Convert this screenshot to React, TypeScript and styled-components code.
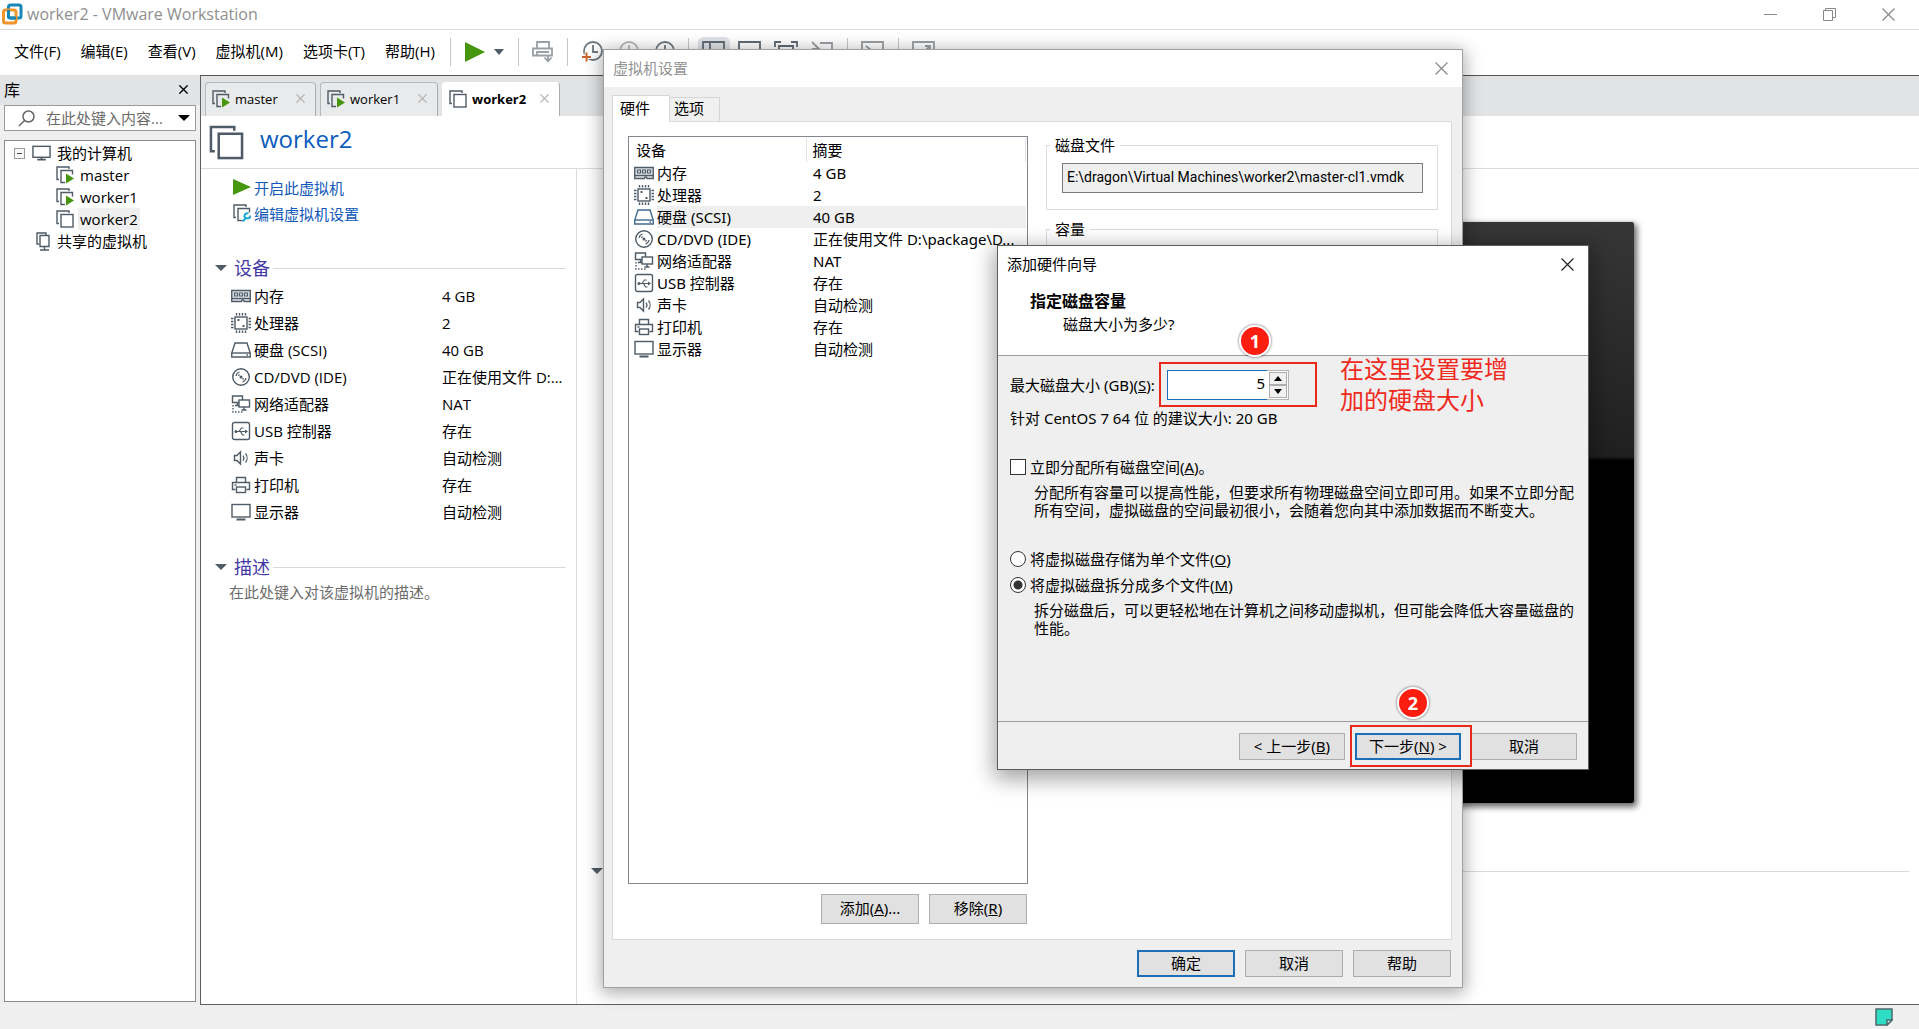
import React, { useState } from 'react';
import styled, { createGlobalStyle, css } from 'styled-components';

const uiFont = '"Open Sans", "Noto Sans CJK SC", sans-serif';
const dialogFont = '"Noto Sans", "Noto Sans CJK SC", sans-serif';
const slate = '#4f5b66';
const green = '#46960f';

const Global = createGlobalStyle`
  *, *::before, *::after { box-sizing: border-box; }
  body { margin: 0; font-family: ${uiFont}; font-size: 15px; color: #000; background: #fff; overflow: hidden; }
  button, input { font: inherit; color: inherit; }
  button { padding: 0; border: 0; background: none; white-space: nowrap; }
  h1, h2, p, ul, fieldset, legend { margin: 0; padding: 0; }
  ul { list-style: none; }
  svg { display: block; flex: none; }
`;

/* ---------- icons ---------- */

const VmIcon = ({ size = 18, running = false, tool = false, weight = 1.4 }: { size?: number; running?: boolean; tool?: boolean; weight?: number }) => (
  <svg width={size} height={size} viewBox="0 0 18 18" fill="none" stroke={slate} strokeWidth={weight}>
    <path d="M13 3V1H1v12.5h2" />
    {running || tool ? <path d="M16.5 8.5V4.5H5v12h4" /> : <rect x="5" y="4.5" width="12" height="12.5" />}
    {running && <path d="M10 7.5l8 5-8 5z" fill={green} stroke="none" />}
    {tool && (
      <path d="M9.500 17.500l4-4M13 14.500a2.800 2.800 0 0 1 2.500-5M13.500 14a2.800 2.800 0 0 0 4-2.500" stroke="#19a9d5" strokeWidth="2" />
    )}
  </svg>
);

const PlayIcon = ({ width = 16, height = 16 }: { width?: number; height?: number }) => (
  <svg width={width} height={height} viewBox="0 0 16 16" preserveAspectRatio="none"><path d="M0 0l16 8-16 8z" fill={green} /></svg>
);

const Caret = ({ width = 12, fill = slate }: { width?: number; fill?: string }) => (
  <svg width={width} height="6" viewBox="0 0 12 6" preserveAspectRatio="none"><path d="M0 0h12L6 6z" fill={fill} /></svg>
);

const Cross = ({ size = 12, stroke = '#777', weight = 1.1 }: { size?: number; stroke?: string; weight?: number }) => (
  <svg width={size} height={size} viewBox="0 0 12 12" stroke={stroke} strokeWidth={weight}><path d="M.5.5l11 11M11.500.5l-11 11" /></svg>
);

const MonitorIcon = ({ width = 20 }: { width?: number }) => (
  <svg width={width} height="18" viewBox="0 0 20 18" fill="none" stroke={slate} strokeWidth="1.5">
    <rect x="1" y="2" width="18" height="11.5" /><path d="M10 13.500v2M5.500 16h9" strokeWidth="1.800" />
  </svg>
);

type Kind = 'memory' | 'cpu' | 'disk' | 'cd' | 'net' | 'usb' | 'sound' | 'printer' | 'display';

const shapes: Record<Kind, React.ReactNode> = {
  memory: (
    <>
      <path d="M.75 4.500h18.500v11h-6l-1-1.500h-1l-1 1.500h-9.500z" fill="#dfe4e8" />
      <path d="M.75 12.500h18.500" />
      <path d="M3.500 7h3v3h-3zM8.500 7h3v3h-3zM13.500 7h3v3h-3z" strokeWidth="1.2" />
    </>
  ),
  cpu: (
    <>
      <rect x="4" y="4" width="12" height="12" />
      <path d="M5.500 0v2.500M8.500 0v2.500M11.500 0v2.500M14.500 0v2.500M5.500 17.500V20M8.500 17.500V20M11.500 17.500V20M14.500 17.500V20M0 5.500h2.500M0 8.500h2.500M0 11.500h2.500M0 14.500h2.500M17.500 5.500H20M17.500 8.500H20M17.500 11.500H20M17.500 14.500H20" />
      <path d="M6.500 7h2M11.500 13h2" strokeWidth="2" />
    </>
  ),
  disk: (
    <>
      <path d="M4 3h12l3.250 10v4H.75v-4z" /><path d="M1 13h18" /><path d="M15.500 15h1.500" />
    </>
  ),
  cd: (
    <>
      <circle cx="10" cy="10" r="8.300" /><circle cx="10" cy="10" r="1.500" fill={slate} stroke="none" />
      <path d="M5 9a5 5 0 0 1 3.500-4M15 11a5 5 0 0 1-3.500 4M7.500 9a3 3 0 0 1 1-1.500M12.500 11a3 3 0 0 1-1 1.500" strokeWidth="1.200" />
    </>
  ),
  net: (
    <>
      <path d="M8 8.500H1.500V2H11.500v4" /><path d="M4 11.500h4M6.500 8.500v3" />
      <rect x="8" y="6" width="10.500" height="7" /><path d="M10.500 16h5M13 13v3" />
      <path d="M2 11v7h11" strokeDasharray="1.500 1.500" />
    </>
  ),
  usb: (
    <>
      <rect x="1.500" y="1.500" width="17" height="17" rx="2" />
      <path d="M5 10.500h11M8 10.500l2.500-3.500h2M9.500 10.500l2 3.500h2" strokeWidth="1.200" />
      <circle cx="5" cy="10.500" r="1.500" fill={slate} stroke="none" /><path d="M14 8.500l3 2-3 2z" fill={slate} stroke="none" />
    </>
  ),
  sound: (
    <>
      <path d="M3.500 7.500h2.500l3.500-3.500v12l-3.500-3.500H3.500z" /><path d="M12 7.500a4 4 0 0 1 0 5M14.500 5.500a7 7 0 0 1 0 9" strokeWidth="1.200" />
    </>
  ),
  printer: (
    <>
      <path d="M5.500 7V2.500h9V7" /><path d="M4.500 14.500h-3V7.500h17v7h-3" /><rect x="5.500" y="12" width="9" height="5.500" /><path d="M3.500 10h2" />
    </>
  ),
  display: (
    <>
      <rect x="1" y="2.500" width="18" height="12.500" /><path d="M5.500 17.500h9" strokeWidth="2" />
    </>
  ),
};

const DeviceIcon = ({ kind, active }: { kind: Kind; active?: boolean }) => (
  <svg width="20" height="20" viewBox="0 0 20 20" fill="none" stroke={active ? '#41698f' : slate} strokeWidth="1.400">{shapes[kind]}</svg>
);

const ToolIcon = ({ children, tone = '#5f6b75' }: { children: React.ReactNode; tone?: string }) => (
  <svg width="24" height="22" viewBox="0 0 24 22" fill="none" stroke={tone} strokeWidth="1.800">{children}</svg>
);

/* ---------- main window ---------- */

const Window = styled.div`
  position: relative; display: flex; flex-direction: column; height: 100vh; background: #efefef;
`;
const TitleBar = styled.header`
  display: flex; align-items: center; height: 30px; padding: 0 24px 1px 2px; gap: 4px;
  background: #fff; border-bottom: 1px solid #dedede; color: #8f8f8f;
`;
const WindowName = styled.span`flex: 1; font-size: 16px; line-height: 20px;`;
const WindowControls = styled.div`
  display: flex; gap: 46px;
  button { display: flex; align-items: center; justify-content: center; width: 13px; height: 20px; }
`;
const MenuBar = styled.nav`
  display: flex; align-items: center; height: 45px; padding: 0 14px 2px; background: #fff; overflow: hidden;
`;
const MenuGroup = styled.div`display: flex; gap: 20px; margin-right: 15px;`;
const MenuItem = styled.button`font-size: 15px; line-height: 22px; padding-bottom: 2px;`;
const Divider = styled.span`width: 1px; height: 28px; background: #c4c7ca; flex: none;`;
const ToolGroup = styled.div<{ $gap?: number; $pad?: number }>`
  display: flex; align-items: center; gap: ${p => p.$gap ?? 10}px; padding: 0 ${p => p.$pad ?? 14}px;
`;
const ToolButton = styled.button<{ $on?: boolean }>`
  display: flex; align-items: center; justify-content: center;
  ${p => p.$on && css`background: #dfe3e7; box-shadow: 0 0 0 4px #dfe3e7; border-radius: 2px;`}
`;

const Workspace = styled.div`display: flex; flex: 1; min-height: 0;`;
const Sidebar = styled.aside`
  display: flex; flex-direction: column; width: 200px; flex: none; padding: 0 4px 3px; background: #efefef;
`;
const SidebarHead = styled.div`
  display: flex; align-items: center; justify-content: space-between; height: 30px; margin: 0 -4px; padding: 0 12px 1px 4px;
  background: #e2e3e5;
  h2 { font-size: 16px; font-weight: 400; line-height: 22px; }
`;
const Search = styled.label`
  display: flex; align-items: center; height: 26px; padding: 0 5px 0 13px; gap: 11px; margin-bottom: 9px;
  background: #fff; border: 1px solid #999;
  input { flex: 1; min-width: 0; padding: 0; border: 0; outline: 0; background: none; line-height: 22px; }
  input::placeholder { color: #6b6b6b; opacity: 1; }
`;
const Tree = styled.ul`flex: 1; padding: 1px 0 0 9px; background: #fff; border: 1px solid #8b8b8b;`;
const TreeRow = styled.li<{ $depth: number }>`
  display: flex; align-items: center; height: 22px; padding-left: ${p => p.$depth}px; gap: 4px;
`;
const TreeName = styled.span<{ $selected?: boolean }>`
  padding: 0 2px; line-height: 22px; background: ${p => (p.$selected ? '#efefef' : 'transparent')};
`;
const Expander = styled.span`
  display: flex; align-items: center; justify-content: center; width: 11px; height: 11px; margin-right: 3px;
  border: 1px solid #9a9a9a; background: #f7f7f7;
  &::after { content: ''; width: 5px; height: 1px; background: #444; }
`;

const Main = styled.main`
  display: flex; flex-direction: column; flex: 1; min-width: 0; background: #fff;
  border-left: 1px solid #606060; border-top: 1px solid #555; border-bottom: 1px solid #606060;
`;
const TabStrip = styled.div`
  display: flex; align-items: flex-end; gap: 4px; height: 40px; padding-left: 4px; background: #e2e3e5;
`;
const DocTab = styled.button<{ $active?: boolean; $width: number }>`
  display: flex; align-items: center; width: ${p => p.$width}px; height: 34px; padding: 0 10px 2px 6px; gap: 5px;
  border: 1px solid ${p => (p.$active ? '#fff' : '#b5b7b9')}; border-right-color: #a9abad; border-bottom: 0; border-radius: 4px 4px 0 0;
  background: ${p => (p.$active ? '#fff' : '#e9eaeb')}; font-size: 13px; font-weight: ${p => (p.$active ? 700 : 400)};
  span { flex: 1; text-align: left; }
`;
const Heading = styled.div`
  display: flex; align-items: center; height: 53px; padding: 0 8px; gap: 16px; border-bottom: 1px solid #dcdcdc;
  h1 { margin-bottom: 6px; font-size: 24px; line-height: 32px; font-weight: 400; color: #0b5cbe; }
`;
const Columns = styled.div`display: flex; flex: 1; min-height: 0;`;
const Summary = styled.section`width: 376px; flex: none; padding: 5px 10px 0 14px; border-right: 1px solid #dcdcdc;`;
const Actions = styled.div`display: flex; flex-direction: column; padding: 0 18px; margin-bottom: 28px;`;
const Action = styled.a`
  display: flex; align-items: center; gap: 3px; height: 26px; color: #1259b8; text-decoration: none;
  svg { width: 18px; }
`;
const SectionTitle = styled.div`
  display: flex; align-items: center; gap: 7px; height: 28px;
  h2 { font-size: 18px; line-height: 28px; font-weight: 400; color: #4438a5; }
  &::after { content: ''; flex: 1; height: 1px; margin-left: -4px; background: #d9d9d9; }
`;
const Description = styled.p`padding-left: 14px; line-height: 22px; color: #6c6c6c;`;

const DeviceTable = styled.table<{ $row: number; $name: number }>`
  width: 100%; table-layout: fixed; border-collapse: collapse;
  td, th { height: ${p => p.$row}px; padding: 0; font-weight: 400; text-align: left; line-height: 20px; white-space: nowrap; overflow: hidden; text-overflow: ellipsis; }
  .icon { width: 23px; }
  .name { width: ${p => p.$name}px; }
`;
const SummaryDevices = styled.div`padding: 0 0 28px 16px;`;

const Details = styled.section`display: flex; flex-direction: column; flex: 1; min-width: 0; padding: 53px 10px 0 14px;`;
const Preview = styled.div`
  width: 774px; height: 581px; margin: 0 0 54px 269px; border-radius: 2px;
  background: linear-gradient(#363636, #202020 40%, #1c1c1c 40.500%, #000 41%); box-shadow: 2px 3px 6px 1px rgba(0, 0, 0, .6);
`;
const StatusBar = styled.footer`
  display: flex; align-items: center; justify-content: flex-end; height: 24px; padding-right: 26px; background: #efefef;
`;

/* ---------- dialogs ---------- */

const Settings = styled.section`
  position: absolute; left: 603px; top: 49px; display: flex; flex-direction: column; width: 860px; height: 939px;
  font-family: ${dialogFont}; background: #efefef; border: 1px solid #a0a0a0; box-shadow: 0 3px 16px 2px rgba(0, 0, 0, .33);
`;
const DialogTitle = styled.header<{ $muted?: boolean }>`
  display: flex; align-items: center; justify-content: space-between; height: 37px; padding: 0 14px 0 9px; flex: none;
  font-family: ${uiFont}; line-height: 22px; background: #fff; color: ${p => (p.$muted ? '#929292' : '#000')};
  span { padding-bottom: 2px; }
`;
const PageTabs = styled.div`display: flex; align-items: flex-end; height: 34px; padding-left: 8px; flex: none;`;
const PageTab = styled.button<{ $active?: boolean }>`
  position: relative; height: ${p => (p.$active ? 27 : 24)}px; width: ${p => (p.$active ? 58 : 50)}px; padding: 0 0 3px ${p => (p.$active ? 7 : 4)}px; text-align: left;
  margin-bottom: ${p => (p.$active ? -1 : 0)}px; border: 1px solid #d6d6d6; border-bottom: 0; border-left-width: ${p => (p.$active ? 1 : 0)}px;
  background: ${p => (p.$active ? '#fff' : '#f0f0f0')}; line-height: 20px;
`;
const Page = styled.div`
  display: flex; flex: 1; min-height: 0; gap: 18px; margin: 0 10px 0 8px; padding: 14px 13px 15px 15px; background: #fff; border: 1px solid #d9d9d9;
`;
const ListColumn = styled.div`display: flex; flex-direction: column; width: 400px; flex: none;`;
const ListBox = styled.div`flex: 1; padding: 1px 1px 0 5px; border: 1px solid #828790;`;
const HardwareTable = styled(DeviceTable)`
  thead th { height: 24px; vertical-align: middle; padding: 0 0 0 2px; }
  thead th + th { padding-left: 6px; border-left: 1px solid #e2e2e2; border-right: 1px solid #e2e2e2; }
  tbody td + td + td { padding-left: 7px; }
`;
const HardwareRow = styled.tr<{ $selected?: boolean }>`
  td + td { background: ${p => (p.$selected ? '#efefef' : 'transparent')}; }
`;
const ButtonRow = styled.div`display: flex; justify-content: flex-end; gap: 10px;`;
const ListButtons = styled(ButtonRow)`margin-top: 10px; padding-right: 1px;`;
const SettingsFooter = styled(ButtonRow)`padding: 10px 11px 10px;`;
const PushButton = styled.button<{ $primary?: boolean; $width?: number; $height?: number }>`
  width: ${p => p.$width ?? 98}px; height: ${p => p.$height ?? 27}px; padding-bottom: 2px; line-height: 20px;
  border: ${p => (p.$primary ? '2px solid #1a6fb8' : '1px solid #adadad')}; background: #e1e1e1;
`;
const FormColumn = styled.div`display: flex; flex-direction: column; gap: 10px; flex: 1; min-width: 0;`;
const Group = styled.fieldset`
  min-width: 0; padding: 9px 14px 16px 15px; border: 1px solid #dcdcdc;
  legend { margin-left: -12px; padding: 0 5px; line-height: 18px; }
`;
const PathInput = styled.input`
  display: block; width: 100%; height: 30px; padding: 0 4px 3px; border: 1px solid #7a7a7a; background: #efefef; outline: 0;
  font-family: Roboto, sans-serif; font-size: 14px;
`;
const EmptyGroupBody = styled.div`height: 150px;`;

const Wizard = styled.section`
  position: absolute; left: 997px; top: 245px; display: flex; flex-direction: column; width: 592px; 
  font-family: ${dialogFont}; background: #efefef; border: 1px solid #5c5c5c; box-shadow: 0 6px 20px 3px rgba(0, 0, 0, .36);
`;
const WizardHead = styled.div`
  padding: 6px 32px 20px; background: #fff; border-bottom: 1px solid #9c9c9c;
  h2 { font-size: 16px; line-height: 24px; font-weight: 700; }
  p { padding-left: 33px; line-height: 22px; }
`;
const WizardBody = styled.div`padding: 14px 12px 53px; line-height: 18px;`;
const SizeRow = styled.div`
  display: grid; grid-template-columns: 157px 122px; align-items: center; margin-bottom: 9px; white-space: nowrap;
`;
const Spinner = styled.div`
  position: relative; display: flex; height: 30px; background: #fff; border: 1px solid #b5b5b5;
  input { width: 100px; padding: 0 2px 5px; border: 1px solid #1a6fb8; border-right: 0; margin: -1px 0 -1px -1px; outline: 0; text-align: right; }
`;
const Steps = styled.span`
  display: flex; flex-direction: column; flex: 1; padding: 1px 1px 1px 2px;
  button { display: flex; flex: 1; align-items: center; justify-content: center; border: 1px solid #adadad; background: #f0f0f0; }
`;
const Choice = styled.label`
  display: flex; align-items: center; gap: 4px; height: 18px;
  input { appearance: none; width: 16px; height: 16px; margin: 0; border: 1px solid #333; background: #fff; }
  input[type='checkbox']:checked { background: linear-gradient(#333, #333) center / 8px 8px no-repeat #fff; }
  input[type='radio'] { border-radius: 50%; }
  input[type='radio']:checked { background: radial-gradient(circle, #333 4px, #fff 5px); }
`;
const Hint = styled.p`margin: 7px 0 31px; padding-left: 24px; line-height: 18px; width: 566px;`;
const Gap = styled.div<{ $h: number }>`height: ${p => p.$h}px;`;
const WizardFooter = styled(ButtonRow)`padding: 11px 11px 9px; border-top: 1px solid #9c9c9c;`;
const Anchor = styled.div`position: relative;`;

/* ---------- tutorial marks drawn over the wizard ---------- */

const Frame = styled.span<{ $inset: string }>`
  position: absolute; inset: ${p => p.$inset}; border: 2px solid #e8291c; pointer-events: none;
`;
const Badge = styled.span<{ $left: number }>`
  position: absolute; left: ${p => p.$left}px; top: -46px; display: flex; align-items: center; justify-content: center; width: 32px; height: 32px;
  border: 2px solid #fff; border-radius: 50%; background: #fb1d10; box-shadow: 0 0 2px 1px rgba(0, 0, 0, .3); color: #fff;
  font: 700 18px/24px "Noto Sans", sans-serif;
`;
const Note = styled.span`
  position: absolute; left: 172px; top: -18px; width: 170px; font-size: 24px; line-height: 31px; color: #f02a1d; white-space: normal;
`;

/* ---------- data ---------- */

interface Device { kind: Kind; name: string; value: string; brief?: string }
const devices: Device[] = [
  { kind: 'memory', name: '内存', value: '4 GB' },
  { kind: 'cpu', name: '处理器', value: '2' },
  { kind: 'disk', name: '硬盘 (SCSI)', value: '40 GB' },
  { kind: 'cd', name: 'CD/DVD (IDE)', value: '正在使用文件 D:\\package\\D...', brief: '正在使用文件 D:...' },
  { kind: 'net', name: '网络适配器', value: 'NAT' },
  { kind: 'usb', name: 'USB 控制器', value: '存在' },
  { kind: 'sound', name: '声卡', value: '自动检测' },
  { kind: 'printer', name: '打印机', value: '存在' },
  { kind: 'display', name: '显示器', value: '自动检测' },
];
const menus = ['文件(F)', '编辑(E)', '查看(V)', '虚拟机(M)', '选项卡(T)', '帮助(H)'];
const machines = [
  { name: 'master', running: true, width: 111 },
  { name: 'worker1', running: true, width: 118 },
  { name: 'worker2', running: false, width: 118 },
];

const Toolbar = () => (
  <>
    <Divider />
    <ToolGroup $gap={9} $pad={14}>
      <ToolButton aria-label="启动"><PlayIcon width={20} height={20} /></ToolButton>
      <ToolButton aria-label="电源选项"><Caret width={10} /></ToolButton>
    </ToolGroup>
    <Divider />
    <ToolGroup $pad={12}>
      <ToolButton aria-label="发送按键">
        <ToolIcon tone="#9a9fa4"><path d="M6 7V1h12v6M2 7.500h19v7H2zM6 14v-3h12M17 14v6M13.500 16.500l3.500 4 3.500-4" /></ToolIcon>
      </ToolButton>
    </ToolGroup>
    <Divider />
    <ToolGroup $gap={12} $pad={12}>
      {['#6f7880', '#b5b9bc', '#6f7880'].map((tone, i) => (
        <ToolButton key={i} aria-label={['快照', '恢复', '管理快照'][i]}>
          <ToolIcon tone={tone}>
            <circle cx="13" cy="10" r="9" /><path d="M13 4v7h5" />
            {i === 0 && <path d="M2 16h9M6.500 11.500v9" stroke="#fff" strokeWidth="4" />}
            {i === 0 && <path d="M2 16h9M6.500 11.500v9" stroke="#c9642c" strokeWidth="2" />}
          </ToolIcon>
        </ToolButton>
      ))}
    </ToolGroup>
    <Divider />
    <ToolGroup $gap={12} $pad={13}>
      <ToolButton $on aria-label="库"><ToolIcon><path d="M1 1h21v19H1zM8 1v19M8 10h14" /></ToolIcon></ToolButton>
      <ToolButton aria-label="缩略图"><ToolIcon><path d="M1 1h21v19H1z" /></ToolIcon></ToolButton>
      <ToolButton aria-label="全屏"><ToolIcon><path d="M1 6V1h6M17 1h6v5M5 5h14v10H5z" /></ToolIcon></ToolButton>
      <ToolButton aria-label="独占"><ToolIcon tone="#9a9fa4"><path d="M2 1l8 8M10 2h12v16M2 8h8" /></ToolIcon></ToolButton>
    </ToolGroup>
    <Divider />
    <ToolGroup $pad={13}><ToolButton aria-label="控制台"><ToolIcon tone="#9a9fa4"><path d="M1 1h21v17H1zM5 5l5 4-5 4" /></ToolIcon></ToolButton></ToolGroup>
    <Divider />
    <ToolGroup $pad={13}><ToolButton aria-label="拉伸"><ToolIcon tone="#9a9fa4"><path d="M1 1h21v17H1zM13 5h5v5M18 5l-7 7" /></ToolIcon></ToolButton></ToolGroup>
  </>
);

export default function App() {
  const [capacity, setCapacity] = useState('5');
  const [allocate, setAllocate] = useState(false);
  const [split, setSplit] = useState(true);
  const step = (by: number) => setCapacity(c => String(Math.max(1, (parseInt(c, 10) || 0) + by)));

  return (
    <>
      <Global />
      <Window>
        <TitleBar>
          <svg width="21" height="24" viewBox="0 0 21 24" fill="none" strokeWidth="3">
            <rect x="6.500" y="3" width="12.500" height="13" rx="2" stroke="#1787b8" />
            <rect x="1.500" y="8" width="12.500" height="13" rx="2" stroke="#f0962a" />
            <path d="M6.500 8v6a2 2 0 0 0 2 2h5.500" stroke="#1787b8" />
          </svg>
          <WindowName>worker2 - VMware Workstation</WindowName>
          <WindowControls>
            <button aria-label="最小化"><svg width="13" height="13" viewBox="0 0 13 13"><path d="M0 6.500h13" stroke="#888" /></svg></button>
            <button aria-label="还原"><svg width="13" height="13" viewBox="0 0 13 13" fill="none" stroke="#888"><path d="M.5 2.500h9v10h-9zM2.500 2V.5h10v9H10" /></svg></button>
            <button aria-label="关闭"><Cross size={13} stroke="#888" /></button>
          </WindowControls>
        </TitleBar>
        <MenuBar>
          <MenuGroup>{menus.map(m => <MenuItem key={m}>{m}</MenuItem>)}</MenuGroup>
          <Toolbar />
        </MenuBar>

        <Workspace>
          <Sidebar>
            <SidebarHead><h2>库</h2><button aria-label="关闭库"><Cross size={9} stroke="#000" weight={1.800} /></button></SidebarHead>
            <Search>
              <svg width="17" height="17" viewBox="0 0 17 17" fill="none" stroke="#666" strokeWidth="1.500"><circle cx="10.500" cy="6.500" r="5.500" /><path d="M6.500 10.500L1 16" /></svg>
              <input aria-label="搜索" placeholder="在此处键入内容..." />
              <Caret fill="#000" />
            </Search>
            <Tree>
              <TreeRow $depth={0}><Expander /><MonitorIcon width={19} /><TreeName>我的计算机</TreeName></TreeRow>
              {machines.map(m => (
                <TreeRow key={m.name} $depth={42}><VmIcon running={m.running} /><TreeName $selected={!m.running}>{m.name}</TreeName></TreeRow>
              ))}
              <TreeRow $depth={21}>
                <svg width="16" height="19" viewBox="0 0 16 19" fill="none" stroke={slate} strokeWidth="1.400"><path d="M4 12H2V1h9v2M5 3.500h9v11H5zM9.500 14.500V18M5 18h9" /></svg>
                <TreeName>共享的虚拟机</TreeName>
              </TreeRow>
            </Tree>
          </Sidebar>

          <Main>
            <TabStrip role="tablist">
              {machines.map(m => (
                <DocTab key={m.name} role="tab" aria-selected={!m.running} $active={!m.running} $width={m.width}>
                  <VmIcon running={m.running} /><span>{m.name}</span><Cross size={9} stroke="#b0b0b0" weight={1.600} />
                </DocTab>
              ))}
            </TabStrip>
            <Heading><VmIcon size={35} weight={1.300} /><h1>worker2</h1></Heading>
            <Columns>
              <Summary>
                <Actions>
                  <Action href="#power"><PlayIcon />开启此虚拟机</Action>
                  <Action href="#edit"><VmIcon tool />编辑虚拟机设置</Action>
                </Actions>
                <SectionTitle><Caret /><h2>设备</h2></SectionTitle>
                <SummaryDevices>
                  <DeviceTable $row={27} $name={188}>
                    <tbody>
                      {devices.map(d => (
                        <tr key={d.kind}><td className="icon"><DeviceIcon kind={d.kind} /></td><td className="name">{d.name}</td><td>{d.brief ?? d.value}</td></tr>
                      ))}
                    </tbody>
                  </DeviceTable>
                </SummaryDevices>
                <SectionTitle><Caret /><h2>描述</h2></SectionTitle>
                <Description>在此处键入对该虚拟机的描述。</Description>
              </Summary>
              <Details>
                <Preview />
                <SectionTitle><Caret /></SectionTitle>
              </Details>
            </Columns>
          </Main>
        </Workspace>
        <StatusBar>
          <svg width="18" height="18" viewBox="0 0 18 18" fill="#2fdcc4" stroke="#4d6a6c" strokeWidth="1.500"><path d="M1 1h16v11l-5 5H1z" /><path d="M17 12h-5v5z" fill="#dff" /></svg>
        </StatusBar>

        <Settings role="dialog" aria-label="虚拟机设置">
          <DialogTitle $muted><span>虚拟机设置</span><button aria-label="关闭"><Cross size={13} stroke="#888" /></button></DialogTitle>
          <PageTabs role="tablist"><PageTab role="tab" $active>硬件</PageTab><PageTab role="tab">选项</PageTab></PageTabs>
          <Page>
            <ListColumn>
              <ListBox>
                <HardwareTable $row={22} $name={149}>
                  <colgroup><col className="icon" /><col className="name" /><col /></colgroup>
                  <thead><tr><th colSpan={2}>设备</th><th>摘要</th></tr></thead>
                  <tbody>
                    {devices.map(d => (
                      <HardwareRow key={d.kind} $selected={d.kind === 'disk'}>
                        <td><DeviceIcon kind={d.kind} active={d.kind === 'disk'} /></td><td>{d.name}</td><td>{d.value}</td>
                      </HardwareRow>
                    ))}
                  </tbody>
                </HardwareTable>
              </ListBox>
              <ListButtons>
                <PushButton $height={30}>添加(<u>A</u>)...</PushButton>
                <PushButton $height={30}>移除(<u>R</u>)</PushButton>
              </ListButtons>
            </ListColumn>
            <FormColumn>
              <Group><legend>磁盘文件</legend><PathInput aria-label="磁盘文件" readOnly value="E:\dragon\Virtual Machines\worker2\master-cl1.vmdk" /></Group>
              <Group><legend>容量</legend><EmptyGroupBody /></Group>
            </FormColumn>
          </Page>
          <SettingsFooter>
            <PushButton $primary>确定</PushButton><PushButton>取消</PushButton><PushButton>帮助</PushButton>
          </SettingsFooter>
        </Settings>

        <Wizard role="dialog" aria-label="添加硬件向导">
          <DialogTitle><span>添加硬件向导</span><button aria-label="关闭"><Cross size={13} stroke="#222" /></button></DialogTitle>
          <WizardHead><h2>指定磁盘容量</h2><p>磁盘大小为多少?</p></WizardHead>
          <WizardBody>
            <SizeRow>
              <label htmlFor="capacity">最大磁盘大小 (GB)(<u>S</u>):</label>
              <Spinner>
                <input id="capacity" inputMode="numeric" value={capacity} onChange={e => setCapacity(e.target.value)} />
                <Steps>
                  <button aria-label="增加" onClick={() => step(1)}><svg width="8" height="5" viewBox="0 0 8 5"><path d="M0 5h8L4 0z" /></svg></button>
                  <button aria-label="减少" onClick={() => step(-1)}><svg width="8" height="5" viewBox="0 0 8 5"><path d="M0 0h8L4 5z" /></svg></button>
                </Steps>
                <Frame $inset="-9px -29px -8px -9px" />
                <Badge $left={71}>1</Badge>
                <Note>在这里设置要增加的硬盘大小</Note>
              </Spinner>
            </SizeRow>
            <p>针对 CentOS 7 64 位 的建议大小: 20 GB</p>
            <Gap $h={31} />
            <Choice><input type="checkbox" checked={allocate} onChange={e => setAllocate(e.target.checked)} /><span>立即分配所有磁盘空间(<u>A</u>)。</span></Choice>
            <Hint>分配所有容量可以提高性能，但要求所有物理磁盘空间立即可用。如果不立即分配所有空间，虚拟磁盘的空间最初很小，会随着您向其中添加数据而不断变大。</Hint>
            <Choice><input type="radio" name="layout" checked={!split} onChange={() => setSplit(false)} /><span>将虚拟磁盘存储为单个文件(<u>O</u>)</span></Choice>
            <Gap $h={8} />
            <Choice><input type="radio" name="layout" checked={split} onChange={() => setSplit(true)} /><span>将虚拟磁盘拆分成多个文件(<u>M</u>)</span></Choice>
            <Hint>拆分磁盘后，可以更轻松地在计算机之间移动虚拟机，但可能会降低大容量磁盘的性能。</Hint>
          </WizardBody>
          <WizardFooter>
            <PushButton $width={106}>&lt; 上一步(<u>B</u>)</PushButton>
            <Anchor>
              <PushButton $primary $width={106}>下一步(<u>N</u>) &gt;</PushButton>
              <Frame $inset="-8px -11px -7px -5px" />
              <Badge $left={42}>2</Badge>
            </Anchor>
            <PushButton $width={106}>取消</PushButton>
          </WizardFooter>
        </Wizard>
      </Window>
    </>
  );
}
